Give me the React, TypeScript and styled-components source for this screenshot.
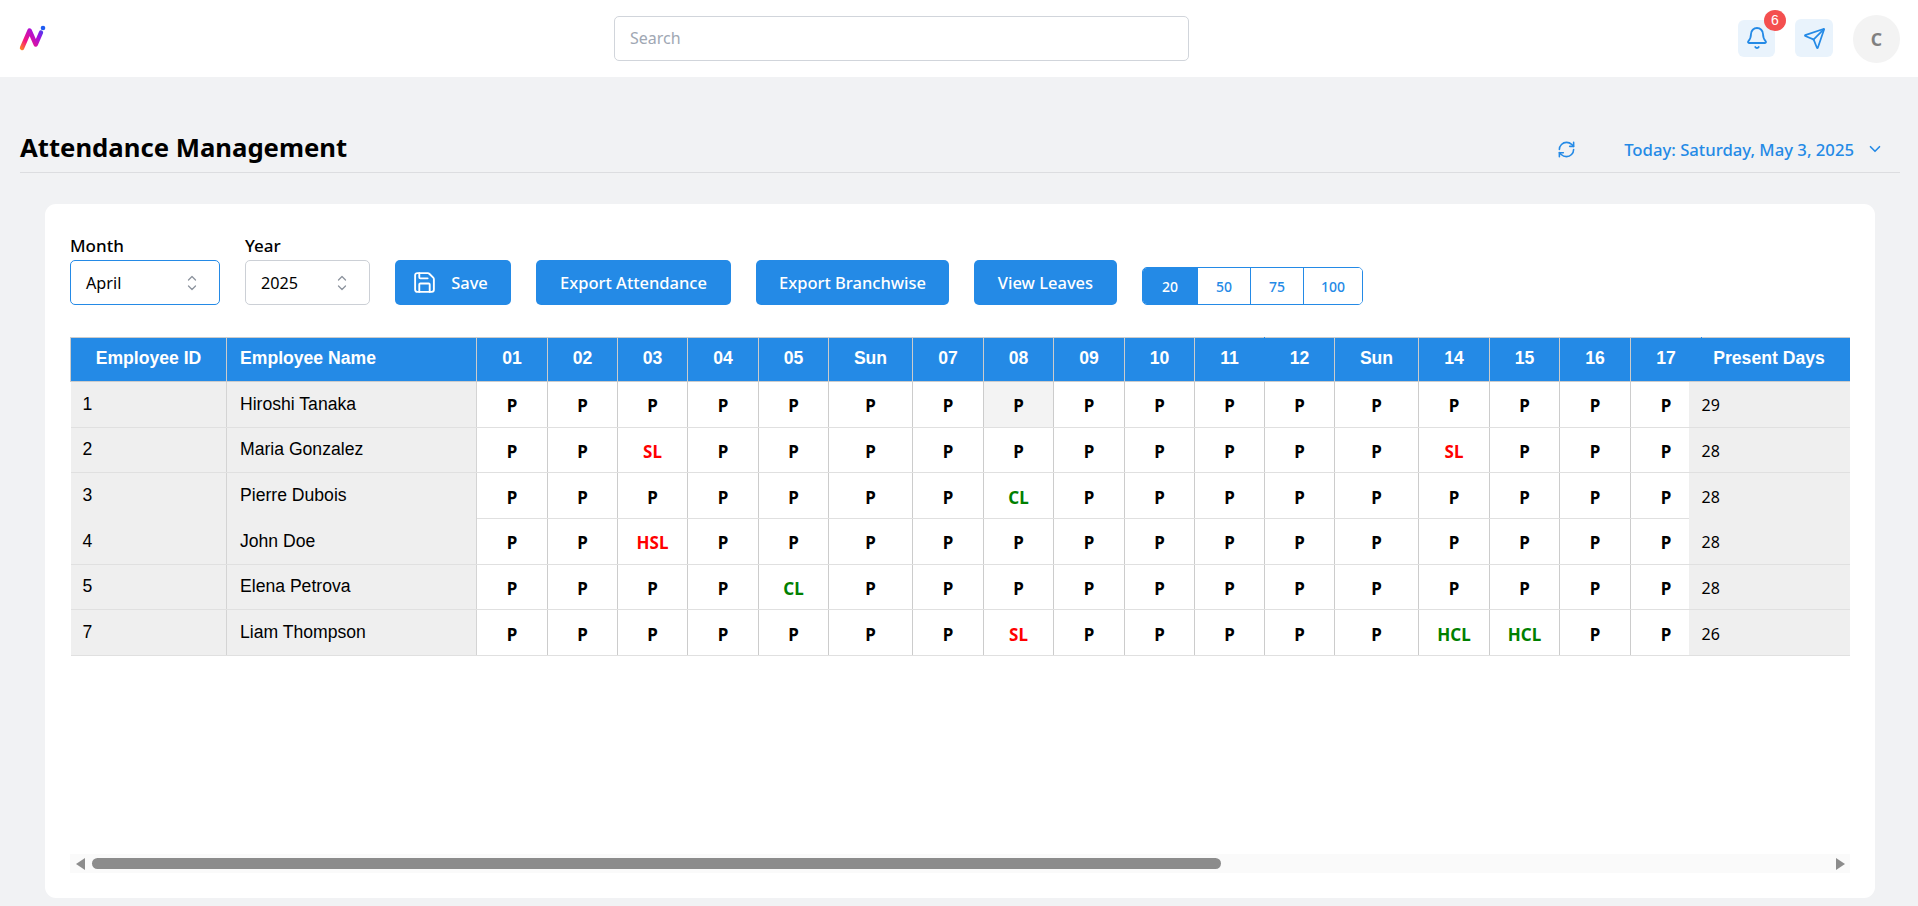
import React from "react";
import styled, { createGlobalStyle } from "styled-components";
import { Bell, ChevronDown, RefreshCw, Save, Send } from "lucide-react";

const uiFont = `"Noto Sans", "Open Sans", sans-serif`;
const tableFont = `"Liberation Sans", Arial, sans-serif`;
const blue = "#248ae6";

const GlobalStyle = createGlobalStyle`
  html, body {
    margin: 0;
    height: 100%;
    overflow: hidden;
    background: #f1f2f4;
    font-family: ${uiFont};
  }
  * {
    box-sizing: border-box;
  }
`;

const SUNDAYS = [6, 13];
const DAY_WIDTHS = [71, 70, 70, 71, 70, 84, 71, 70, 71, 70, 70, 70, 84, 71, 70, 71, 71];
const DAYS = DAY_WIDTHS.map((width, i) => ({ day: i + 1, width }));
const PAGE_SIZES = [
  { size: 20, width: 54 },
  { size: 50, width: 53 },
  { size: 75, width: 53 },
  { size: 100, width: 59 },
];

type Employee = {
  id: number;
  name: string;
  present: number;
  marks: Record<number, string>;
};

const employees: Employee[] = [
  { id: 1, name: "Hiroshi Tanaka", present: 29, marks: {} },
  { id: 2, name: "Maria Gonzalez", present: 28, marks: { 3: "SL", 14: "SL" } },
  { id: 3, name: "Pierre Dubois", present: 28, marks: { 8: "CL" } },
  { id: 4, name: "John Doe", present: 28, marks: { 3: "HSL" } },
  { id: 5, name: "Elena Petrova", present: 28, marks: { 5: "CL" } },
  { id: 7, name: "Liam Thompson", present: 26, marks: { 8: "SL", 14: "HCL", 15: "HCL" } },
];

const markColor = (mark: string) => {
  if (mark === "SL" || mark === "HSL") return "#ff0000";
  if (mark === "CL" || mark === "HCL") return "#008000";
  return "#000";
};

const ChevronPair = () => (
  <svg width="12" height="18" viewBox="0 0 12 18" fill="none" stroke="#8d949e" strokeWidth="1.3" strokeLinecap="round" strokeLinejoin="round">
    <path d="M2.5 6 6 2.5 9.5 6" />
    <path d="M2.5 12 6 15.5 9.5 12" />
  </svg>
);

const Logo = () => (
  <svg width="30" height="30" viewBox="0 0 30 30" fill="none">
    <defs>
      <linearGradient id="logoGrad" x1="2" y1="26" x2="26" y2="6" gradientUnits="userSpaceOnUse">
        <stop offset="0" stopColor="#ff8a1e" />
        <stop offset="0.3" stopColor="#f5157f" />
        <stop offset="0.7" stopColor="#a50fe0" />
        <stop offset="1" stopColor="#2a4df0" />
      </linearGradient>
    </defs>
    <path d="M4 25 11.6 7.5 17.8 21.5 23 9.5" stroke="url(#logoGrad)" strokeWidth="4.4" strokeLinecap="round" strokeLinejoin="round" />
    <circle cx="25" cy="5" r="2.3" fill="#1f5cf2" />
  </svg>
);

const App = () => {
  return (
    <>
      <GlobalStyle />
      <Header>
        <LogoBox>
          <Logo />
        </LogoBox>
        <SearchInput placeholder="Search" />
        <HeaderActions>
          <IconButton $size={37}>
            <Bell size={24} strokeWidth={1.8} />
            <Badge>6</Badge>
          </IconButton>
          <IconButton $size={38}>
            <Send size={23} strokeWidth={1.8} />
          </IconButton>
          <Avatar>C</Avatar>
        </HeaderActions>
      </Header>
      <Main>
        <TitleRow>
          <Title>Attendance Management</Title>
          <DateBox>
            <RefreshCw size={19} strokeWidth={2} />
            <DateText>Today: Saturday, May 3, 2025</DateText>
            <ChevronDown size={18} strokeWidth={2.2} />
          </DateBox>
        </TitleRow>
        <Card>
          <Toolbar>
            <Field>
              <FieldLabel>Month</FieldLabel>
              <SelectBox $width={150} $focused>
                April
                <ChevronPair />
              </SelectBox>
            </Field>
            <Field>
              <FieldLabel>Year</FieldLabel>
              <SelectBox $width={125}>
                2025
                <ChevronPair />
              </SelectBox>
            </Field>
            <SaveButton $width={116}>
              <Save size={25} strokeWidth={1.8} />
              Save
            </SaveButton>
            <ActionButton $width={195}>Export Attendance</ActionButton>
            <ActionButton $width={193}>Export Branchwise</ActionButton>
            <ActionButton $width={143}>View Leaves</ActionButton>
            <Pager>
              {PAGE_SIZES.map((page) => (
                <PageSize key={page.size} $active={page.size === 20} $width={page.width}>
                  {page.size}
                </PageSize>
              ))}
            </Pager>
          </Toolbar>
          <TableScroll>
            <Table>
              <thead>
                <tr>
                  <HeadCell $width={156} $sticky="id">Employee ID</HeadCell>
                  <HeadCell $width={250} $sticky="name" $left>Employee Name</HeadCell>
                  {DAYS.map(({ day, width }) => (
                    <HeadCell key={day} $width={width} $plain={day === 11 || day === 17}>
                      {SUNDAYS.includes(day) ? "Sun" : String(day).padStart(2, "0")}
                    </HeadCell>
                  ))}
                  <HeadCell $width={162} $sticky="present">Present Days</HeadCell>
                </tr>
              </thead>
              <tbody>
                {employees.map((emp) => {
                  const merged = emp.id === 3;
                  const below = emp.id === 4;
                  return (
                    <tr key={emp.id}>
                      <InfoCell $sticky="id" $merged={merged} $below={below}>{emp.id}</InfoCell>
                      <InfoCell $sticky="name" $merged={merged} $below={below}>{emp.name}</InfoCell>
                      {DAYS.map(({ day }) => {
                        const mark = emp.marks[day] || "P";
                        return (
                          <DayCell key={day} $color={markColor(mark)} $hover={emp.id === 1 && day === 8}>
                            {mark}
                          </DayCell>
                        );
                      })}
                      <PresentCell $merged={merged} $below={below}>{emp.present}</PresentCell>
                    </tr>
                  );
                })}
              </tbody>
            </Table>
          </TableScroll>
          <ScrollTrack>
            <svg width="9" height="12" viewBox="0 0 9 12">
              <path d="M0 6 9 0v12z" fill="#8c8c8c" />
            </svg>
            <ScrollThumb />
            <ScrollEnd>
              <svg width="9" height="12" viewBox="0 0 9 12">
                <path d="M9 6 0 0v12z" fill="#8c8c8c" />
              </svg>
            </ScrollEnd>
          </ScrollTrack>
        </Card>
      </Main>
    </>
  );
};

export default App;

const Header = styled.header`
  height: 77px;
  background: #fff;
  display: grid;
  grid-template-columns: 594px 575px 1fr;
  align-items: center;
  padding: 0 18px 0 20px;
`;

const LogoBox = styled.div`
  display: flex;
  align-items: center;
  margin-top: -1px;
  margin-left: -2px;
`;

const SearchInput = styled.input`
  height: 45px;
  width: 575px;
  margin-top: -1px;
  border: 1px solid #d1d5db;
  border-radius: 5px;
  padding: 0 15px;
  font-family: ${uiFont};
  font-size: 16px;
  outline: none;

  &::placeholder {
    color: #a0a7b3;
  }
`;

const HeaderActions = styled.div`
  display: flex;
  justify-content: flex-end;
  align-items: center;
  gap: 20px;
`;

const IconButton = styled.button<{ $size: number }>`
  position: relative;
  width: ${(p) => p.$size}px;
  height: ${(p) => p.$size}px;
  margin-top: -1px;
  border: none;
  padding: 0;
  border-radius: 6px;
  background: #e9f3fc;
  color: ${blue};
  display: flex;
  align-items: center;
  justify-content: center;
`;

const Badge = styled.span`
  position: absolute;
  top: -10px;
  right: -11px;
  width: 22px;
  height: 21px;
  border-radius: 50%;
  background: #f44f4f;
  color: #fff;
  font-size: 14px;
  line-height: 21px;
  text-align: center;
`;

const Avatar = styled.div`
  width: 47px;
  height: 48px;
  border-radius: 50%;
  background: #f3f3f3;
  color: #808080;
  font-size: 17.6px;
  font-weight: 700;
  display: flex;
  align-items: center;
  justify-content: center;
`;

const Main = styled.main`
  padding: 0 18px 0 20px;
`;

const TitleRow = styled.div`
  height: 96px;
  padding-top: 49px;
  display: flex;
  align-items: flex-start;
  justify-content: space-between;
  border-bottom: 1px solid #dcdde0;
`;

const Title = styled.h1`
  margin: 0;
  font-size: 25.7px;
  line-height: 44px;
  font-weight: 700;
  color: #000;
`;

const DateBox = styled.div`
  display: flex;
  align-items: center;
  height: 44px;
  margin-top: 1px;
  padding-right: 16px;
  color: ${blue};
`;

const DateText = styled.span`
  font-size: 16.7px;
  font-weight: 500;
  margin: 0 12px 0 48px;
`;

const Card = styled.section`
  margin: 31px 25px 0;
  height: 694px;
  background: #fff;
  border-radius: 11px;
  padding: 31px 25px 25px;
  display: flex;
  flex-direction: column;
`;

const Toolbar = styled.div`
  display: flex;
  align-items: flex-end;
  gap: 25px;
  height: 70px;
  margin-bottom: 32px;
`;

const Field = styled.div`
  display: flex;
  flex-direction: column;
  gap: 3px;
`;

const FieldLabel = styled.label`
  font-size: 17px;
  line-height: 22px;
  font-weight: 500;
  color: #000;
`;

const SelectBox = styled.div<{ $width: number; $focused?: boolean }>`
  width: ${(p) => p.$width}px;
  height: 45px;
  border: 1px solid ${(p) => (p.$focused ? blue : "#ccd0d6")};
  border-radius: 5px;
  padding: 0 21px 0 15px;
  display: flex;
  align-items: center;
  justify-content: space-between;
  font-size: 16.2px;
  color: #000;
  background: #fff;
`;

const ActionButton = styled.button<{ $width: number }>`
  width: ${(p) => p.$width}px;
  height: 45px;
  border: none;
  border-radius: 5px;
  background: ${blue};
  color: #fff;
  font-family: ${uiFont};
  font-size: 16.5px;
  font-weight: 500;
  display: flex;
  align-items: center;
  justify-content: center;
`;

const SaveButton = styled(ActionButton)`
  gap: 14px;
  padding: 0 6px 0 0;
`;

const Pager = styled.div`
  display: flex;
  height: 38px;
  border: 1px solid ${blue};
  border-radius: 5px;
  overflow: hidden;
`;

const PageSize = styled.div<{ $active?: boolean; $width: number }>`
  width: ${(p) => p.$width}px;
  display: flex;
  align-items: center;
  justify-content: center;
  font-size: 14px;
  font-weight: 500;
  background: ${(p) => (p.$active ? blue : "#fff")};
  color: ${(p) => (p.$active ? "#fff" : blue)};

  & + & {
    border-left: 1px solid ${blue};
  }
`;

const TableScroll = styled.div`
  flex: 1;
  overflow: hidden;
`;

const ScrollTrack = styled.div`
  height: 19px;
  background: #fafafa;
  display: flex;
  align-items: center;
  gap: 7px;
  padding: 0 5px 0 6px;
`;

const ScrollThumb = styled.div`
  width: 1129px;
  height: 11px;
  border-radius: 6px;
  background: #8c8c8c;
`;

const ScrollEnd = styled.div`
  margin-left: auto;
  display: flex;
`;

const Table = styled.table`
  width: 1793px;
  table-layout: fixed;
  border-collapse: collapse;
`;

type Sticky = "id" | "name" | "present";

const stickyOffset = (s?: Sticky) => {
  if (s === "id") return "position: sticky; left: 0; z-index: 2;";
  if (s === "name") return "position: sticky; left: 156px; z-index: 2;";
  if (s === "present") return "position: sticky; right: 0; z-index: 2;";
  return "";
};

const HeadCell = styled.th<{ $width: number; $sticky?: Sticky; $left?: boolean; $plain?: boolean }>`
  width: ${(p) => p.$width}px;
  height: 44px;
  padding: 0 ${(p) => (p.$left ? "13px" : "0")} 3px;
  background: ${blue};
  color: #fff;
  font-family: ${tableFont};
  font-size: 17.6px;
  font-weight: 700;
  text-align: ${(p) => (p.$left ? "left" : "center")};
  border: 1px solid #ccc;
  border-right-color: ${(p) => (p.$plain ? blue : "#ccc")};
  ${(p) => stickyOffset(p.$sticky)}
`;

const InfoCell = styled.td<{ $sticky: Sticky; $merged?: boolean; $below?: boolean }>`
  height: 45.67px;
  padding: 0 13px 0 ${(p) => (p.$sticky === "id" ? "12px" : "13px")};
  background: #efefef;
  color: #000;
  font-family: ${tableFont};
  font-size: 17.6px;
  border-bottom: ${(p) => (p.$merged ? "none" : "1px solid #e0e0e0")};
  border-top: ${(p) => (p.$below ? "none" : "1px solid #e0e0e0")};
  border-right: 1px solid #d4d4d4;
  ${(p) => stickyOffset(p.$sticky)}
`;

const DayCell = styled.td<{ $color: string; $hover?: boolean }>`
  height: 45.67px;
  padding: 3px 0 0;
  text-align: center;
  background: ${(p) => (p.$hover ? "#f3f3f3" : "#fff")};
  color: ${(p) => p.$color};
  font-size: 17px;
  font-weight: 700;
  border: 1px solid #e0e0e0;
  border-left-color: #ccc;
  border-right-color: #ccc;
`;

const PresentCell = styled.td<{ $merged?: boolean; $below?: boolean }>`
  height: 45.67px;
  padding: 2px 0 0 13px;
  background: #efefef;
  color: #000;
  font-size: 16px;
  border-bottom: ${(p) => (p.$merged ? "none" : "1px solid #e0e0e0")};
  border-top: ${(p) => (p.$below ? "none" : "1px solid #e0e0e0")};
  ${stickyOffset("present")}
`;
